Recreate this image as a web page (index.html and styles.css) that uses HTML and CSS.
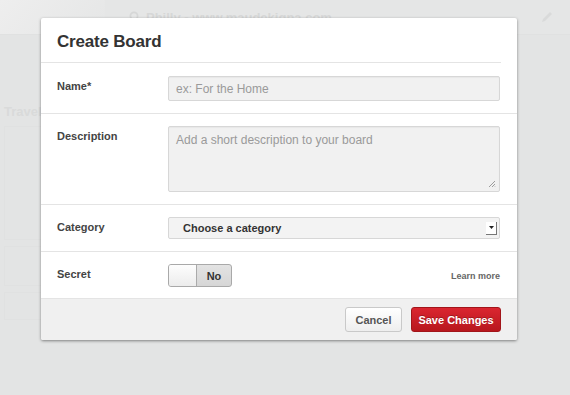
FILE: index.html
```html
<!DOCTYPE html>
<html lang="en">
<head>
    <meta charset="UTF-8">
    <meta name="viewport" content="width=device-width, initial-scale=1.0">
    <title>Create Board</title>
    <link rel="stylesheet" href="styles.css">
</head>
<body>
    <!-- faded page behind the modal -->
    <div class="page">
        <div class="topbar">
            <div class="cover"></div>
            <div class="search">
                <svg width="12" height="12" viewBox="0 0 12 12"><circle cx="5" cy="5" r="3.6" fill="none" stroke="#d6d7d7" stroke-width="1.8"/><path d="M7.6 7.6 L11 11" stroke="#d6d7d7" stroke-width="2"/></svg>
                <span>Philly - www.maudekiqna.com</span>
            </div>
            <svg class="pencil" width="14" height="14" viewBox="0 0 14 14"><path d="M2 12 L3 9 L10 2 L12 4 L5 11 Z" fill="#d9dada"/></svg>
        </div>
        <div class="side">
            <div class="side-title">Travel</div>
            <div class="card tall"></div>
            <div class="card"></div>
            <div class="card short"></div>
        </div>
    </div>

    <div class="modal">
        <div class="modal-header">
            <h1>Create Board</h1>
        </div>
        <div class="row name-row">
            <label class="row-label">Name*</label>
            <input type="text" class="field" placeholder="ex: For the Home">
        </div>
        <div class="row">
            <label class="row-label">Description</label>
            <div class="area">
                <textarea class="field textarea" placeholder="Add a short description to your board"></textarea>
                <svg class="grip" width="8" height="8" viewBox="0 0 8 8"><path d="M7 1 L1 7 M7 4 L4 7 M7 6.5 L6.5 7" stroke="#888" stroke-width="0.8"/></svg>
            </div>
        </div>
        <div class="row">
            <label class="row-label">Category</label>
            <div class="select">
                <span>Choose a category</span>
                <span class="arrow"><svg width="7" height="5" viewBox="0 0 7 5"><path d="M1 1 L6 1 L3.5 4 Z" fill="#222"/></svg></span>
            </div>
        </div>
        <div class="row secret-row">
            <label class="row-label">Secret</label>
            <div class="secret">
                <div class="toggle">
                    <span class="knob"></span>
                    <span class="toggle-text">No</span>
                </div>
                <a class="learn">Learn more</a>
            </div>
        </div>
        <div class="modal-footer">
            <button class="btn cancel">Cancel</button>
            <button class="btn save">Save Changes</button>
        </div>
    </div>
</body>
</html>
```

FILE: styles.css
```css
body {
    margin: 0;
    width: 570px;
    height: 395px;
    overflow: hidden;
    background-color: #e3e4e4;
    font-family: "Liberation Sans", Arial, sans-serif;
    position: relative;
}
.page {
    height: 100%;
}
.topbar {
    height: 34px;
    display: flex;
    align-items: center;
    background-color: #e5e6e6;
    border-bottom: 1px solid #e0e1e1;
}
.cover {
    width: 105px;
    height: 34px;
    background: linear-gradient(135deg, #eeeeee, #e5e6e6);
}
.search {
    display: flex;
    align-items: center;
    gap: 5px;
    margin-left: 24px;
    color: #d6d7d7;
    font-size: 13px;
    font-weight: bold;
}
.pencil {
    margin-left: auto;
    margin-right: 16px;
}
.side {
    padding: 69px 0 0 4px;
    width: 40px;
}
.side-title {
    color: #d9dada;
    font-size: 13px;
    font-weight: bold;
    margin-bottom: 7px;
}
.card {
    border: 1px solid #e0e1e1;
    height: 38px;
    margin-bottom: 6px;
}
.card.tall {
    height: 112px;
}
.card.short {
    height: 26px;
}

/* modal */
.modal {
    position: absolute;
    left: 41px;
    top: 18px;
    width: 476px;
    background-color: #fff;
    border-radius: 2px;
    box-shadow: 0 1px 3px rgba(0, 0, 0, 0.45);
}
.modal-header {
    margin-right: 16px;
    padding: 14px 0 0 16px;
    height: 30px;
    border-bottom: 1px solid #e4e4e4;
}
.modal-header h1 {
    margin: 0;
    font-size: 17px;
    color: #333;
    letter-spacing: -0.2px;
}
.row {
    display: flex;
    padding: 12px 17px 12px 16px;
    border-bottom: 1px solid #e4e4e4;
}
.name-row {
    padding-top: 13px;
}
.row-label {
    width: 111px;
    flex-shrink: 0;
    font-size: 11px;
    font-weight: bold;
    color: #444;
    padding-top: 4px;
}
.field {
    box-sizing: border-box;
    flex: 1;
    height: 25px;
    margin: 0;
    padding: 0 7px;
    border: 1px solid #d7d7d7;
    border-radius: 2px;
    background-color: #f1f1f1;
    box-shadow: inset 0 1px 1px rgba(0, 0, 0, 0.04);
    font-family: inherit;
    font-size: 12px;
    color: #333;
    outline: none;
}
.field::placeholder {
    color: #9a9a9a;
}
.area {
    flex: 1;
    display: flex;
    position: relative;
}
.textarea {
    height: 66px;
    padding: 6px 7px;
    resize: none;
}
.grip {
    position: absolute;
    right: 4px;
    bottom: 4px;
}
.select {
    flex: 1;
    box-sizing: border-box;
    height: 22px;
    display: flex;
    align-items: center;
    padding: 0 2px 0 14px;
    border: 1px solid #d7d7d7;
    border-radius: 2px;
    background-color: #f3f3f3;
    font-size: 11px;
    font-weight: bold;
    color: #333;
}
.arrow {
    margin-left: auto;
    width: 11px;
    height: 13px;
    display: flex;
    align-items: center;
    justify-content: center;
    background-color: #fff;
    border-right: 1px solid #777;
    border-bottom: 1px solid #777;
    box-sizing: border-box;
}
.secret-row {
    padding-top: 12px;
    padding-bottom: 11px;
    border-bottom: none;
}
.secret {
    flex: 1;
    display: flex;
    align-items: center;
    justify-content: space-between;
}
.toggle {
    box-sizing: border-box;
    width: 64px;
    height: 23px;
    display: flex;
    border: 1px solid #a9a9a9;
    border-radius: 3px;
    background: linear-gradient(#e3e3e3, #d6d6d6);
    overflow: hidden;
}
.knob {
    width: 27px;
    background: linear-gradient(#fdfdfd, #ececec);
    border-right: 1px solid #aaa;
}
.toggle-text {
    flex: 1;
    display: flex;
    align-items: center;
    justify-content: center;
    font-size: 11px;
    font-weight: bold;
    color: #333;
}
.learn {
    font-size: 9px;
    font-weight: bold;
    color: #666;
}
.modal-footer {
    display: flex;
    justify-content: flex-end;
    gap: 9px;
    padding: 8px 16px 8px 0;
    background-color: #f0f0f0;
    border-top: 1px solid #e4e4e4;
    border-radius: 0 0 2px 2px;
}
.btn {
    height: 25px;
    padding: 0;
    border-radius: 3px;
    font-family: inherit;
    font-size: 11px;
    font-weight: bold;
    cursor: pointer;
}
.cancel {
    width: 57px;
    color: #555;
    background: linear-gradient(#ffffff, #eeeeee);
    border: 1px solid #c9c9c9;
}
.save {
    width: 90px;
    color: #fff;
    background: linear-gradient(#da2630, #b8171d);
    border: 1px solid #a2151a;
    text-shadow: 0 -1px 0 rgba(0, 0, 0, 0.25);
}
```
